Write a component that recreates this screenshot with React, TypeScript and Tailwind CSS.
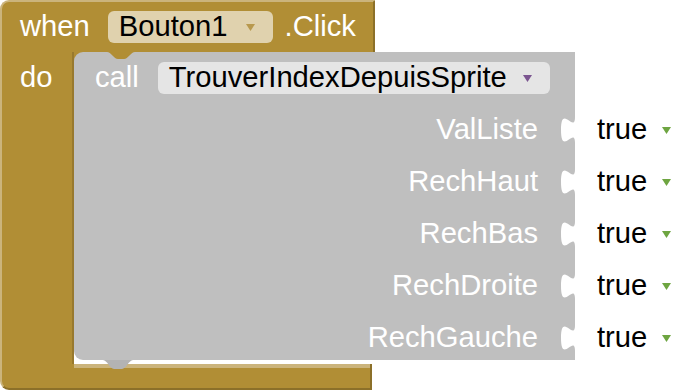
import React from "react";

const labels = ["ValListe", "RechHaut", "RechBas", "RechDroite", "RechGauche"];

function Arrow({ color }: { color: string }) {
  return (
    <svg width="9" height="7" viewBox="0 0 9 7" className="shrink-0">
      <path d="M0 0H9L4.5 7Z" fill={color} />
    </svg>
  );
}

function Socket() {
  // puzzle socket cut into the right edge of the call block
  return (
    <svg
      className="absolute right-0 top-[13px]"
      width="14"
      height="26"
      viewBox="-8 0 8 15"
      preserveAspectRatio="none"
    >
      <path d="M0 0 C0 10 -8 -8 -8 7.5 S0 5 0 15 Z" fill="#ffffff" />
    </svg>
  );
}

export default function App() {
  return (
    <div
      className="flex h-[390px] w-[700px] flex-col overflow-hidden bg-white text-[29.2px]"
      style={{ fontFamily: '"Liberation Sans", Arial, sans-serif' }}
    >
      {/* event header */}
      <div className="flex h-[52px] w-[375px] items-center rounded-tl-[9px] border-l-2 border-t-2 border-r-2 border-l-[#cbb47c] border-t-[#cbb47c] border-r-[#8c7029] bg-[#b18e35] pl-[18px] text-white">
        <span>when</span>
        <div className="ml-[18px] flex h-[32px] items-center gap-[18px] rounded-[6px] bg-[#e0d2ae] pl-[11px] pr-[18px] text-black">
          <span>Bouton1</span>
          <Arrow color="#b8994e" />
        </div>
        <span className="ml-[12px]">.Click</span>
      </div>

      {/* statement area */}
      <div className="flex h-[312px]">
        <div className="w-[74px] border-l-2 border-r-2 border-l-[#cbb47c] border-r-[#98792e] bg-[#b18e35] pl-[18px] pt-[4px] text-white">
          do
        </div>

        <div className="w-[501px] bg-[linear-gradient(to_bottom,#b18e35_50%,#ffffff_50%)]">
          <div className="relative h-[308px] rounded-l-[9px] bg-[#bfbfbf]">
            {/* notch from the event block */}
            <svg className="absolute left-[33px] top-0" width="28" height="7" viewBox="0 0 28 7">
              <path d="M0 0 C4 0 7 7 11 7 L17 7 C21 7 24 0 28 0 Z" fill="#b18e35" />
            </svg>
            {/* tab below */}
            <svg className="absolute left-[29px] top-[308px]" width="30" height="9" viewBox="0 0 30 9">
              <path d="M0 0 C4 0 7 9 11 9 L19 9 C23 9 26 0 30 0 Z" fill="#b3b3b3" />
            </svg>

            <div className="flex h-[52px] items-center pl-[21px]">
              <span className="text-white">call</span>
              <div className="ml-[19px] flex h-[32px] items-center gap-[16px] rounded-[6px] bg-[#e5e5e5] pl-[11px] pr-[18px] text-black">
                <span>TrouverIndexDepuisSprite</span>
                <Arrow color="#7b5590" />
              </div>
            </div>

            {labels.map((l) => (
              <div key={l} className="relative flex h-[52px] items-center justify-end pr-[37px] text-white">
                <span>{l}</span>
                <Socket />
              </div>
            ))}
          </div>
        </div>

        <div className="flex flex-col pt-[52px]">
          {labels.map((l) => (
            <div key={l} className="flex h-[52px] items-center gap-[15px] pl-[22px] text-black">
              <span>true</span>
              <Arrow color="#6ea541" />
            </div>
          ))}
        </div>
      </div>

      {/* bottom of the event block */}
      <div className="flex h-[26px] w-[372px] flex-col rounded-bl-[9px] border-b-2 border-l-2 border-r-2 border-b-[#8c7029] border-l-[#cbb47c] border-r-[#8c7029] bg-[#b18e35]">
        <div className="ml-[72px] h-[4px] bg-[#cbb47c]" />
      </div>
    </div>
  );
}
